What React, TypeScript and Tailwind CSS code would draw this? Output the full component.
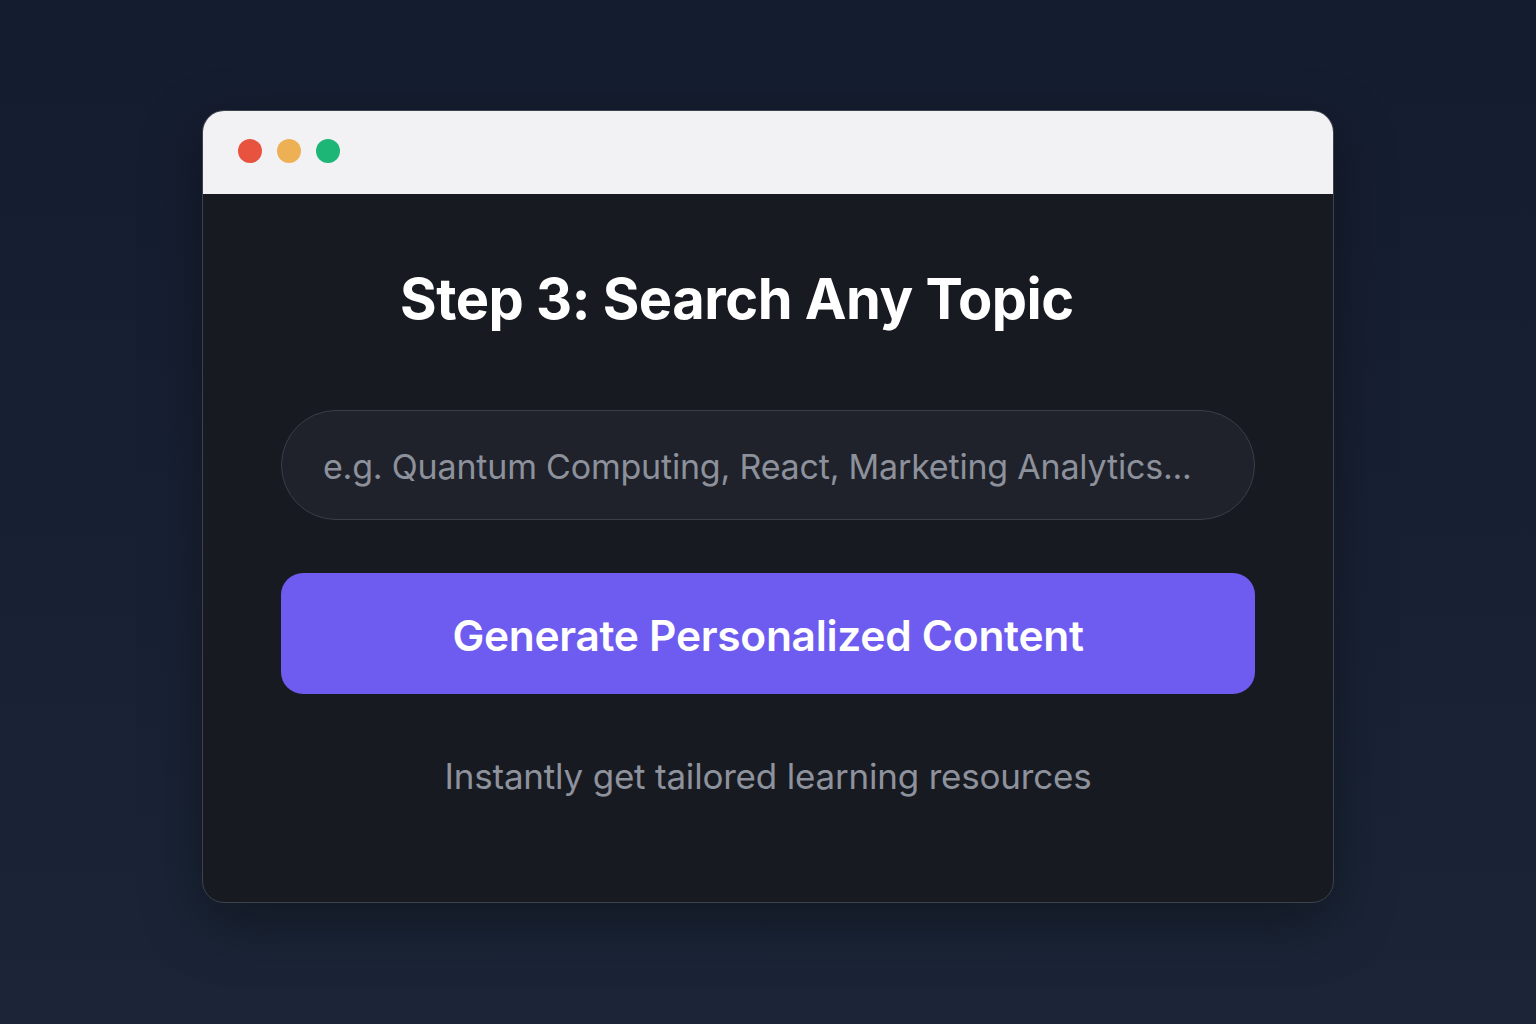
import React from "react";

export default function App() {
  return (
    <div
      className="w-[1536px] h-[1024px] bg-gradient-to-b from-[#141c2f] to-[#1b2537] flex flex-col items-start"
      style={{ fontFamily: "Inter, 'Noto Sans', sans-serif" }}
    >
      <div className="mt-[110px] ml-[202px] w-[1132px] h-[793px] rounded-[22px] border border-[#3d424d] bg-[#181a22] overflow-hidden flex flex-col shadow-[0_20px_60px_rgba(0,0,0,0.35)]">
        <div className="h-[83px] bg-[#f2f2f4] flex items-center gap-[15px] pl-[35px] pb-[3px] shrink-0">
          <span className="w-[24px] h-[24px] rounded-full bg-[#e8533f]" />
          <span className="w-[24px] h-[24px] rounded-full bg-[#eeb054]" />
          <span className="w-[24px] h-[24px] rounded-full bg-[#1db676]" />
        </div>
        <div className="flex flex-col px-[78px]">
          <h1 className="mt-[70px] ml-[119px] text-[56px] leading-[70px] font-bold text-white tracking-[-0.5px]">
            Step 3: Search Any Topic
          </h1>
          <div className="mt-[76px] h-[110px] rounded-full border border-[#3a3e48] bg-[#1f222b] flex items-center pl-[41px] pt-[3px]">
            <span className="text-[34px] text-[#8d919b] tracking-[-0.2px]">
              e.g. Quantum Computing, React, Marketing Analytics...
            </span>
          </div>
          <div className="mt-[53px] h-[121px] rounded-[22px] bg-[#6e5cf0] flex items-center justify-center pt-[4px]">
            <span className="text-[42.5px] font-semibold text-white tracking-[-0.3px]">
              Generate Personalized Content
            </span>
          </div>
          <p className="mt-[60px] text-center text-[35px] leading-[44px] text-[#8e929c] tracking-[-0.2px]">
            Instantly get tailored learning resources
          </p>
        </div>
      </div>
    </div>
  );
}
